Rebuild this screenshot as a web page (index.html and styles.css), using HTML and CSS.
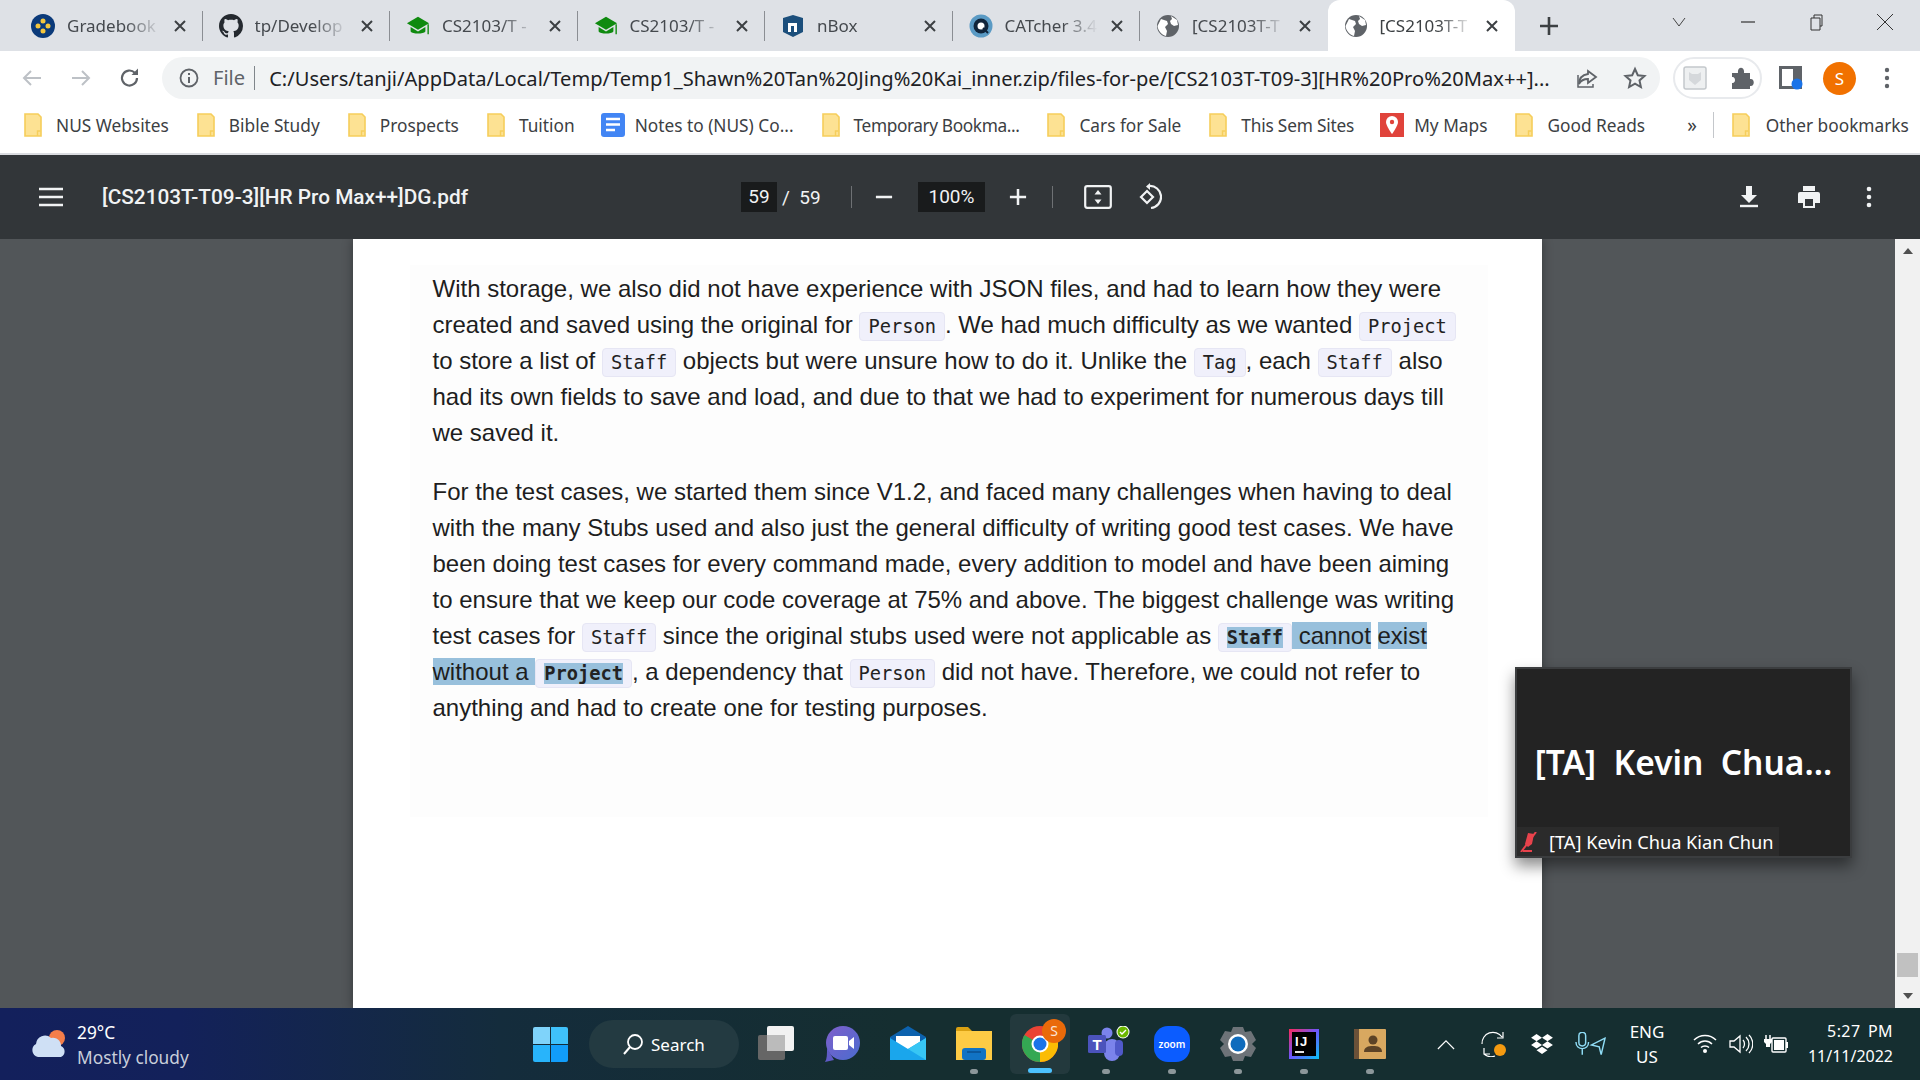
FILE: index.html
```html
<!DOCTYPE html>
<html>

<head>
    <meta charset="UTF-8">
    <title>[CS2103T-T09-3][HR Pro Max++]DG.pdf</title>
    <link rel="stylesheet" href="styles.css">
</head>

<body>
    <svg class="defs" width="0" height="0">
        <symbol id="folder" viewBox="0 0 18 24">
            <path d="M1 1h13l3 3v19H1z" fill="#fde293" stroke="#f6ce5b" stroke-width="1.6" />
            <path d="M13.5 23v-5h3" fill="none" stroke="#f6ce5b" stroke-width="1.4" />
        </symbol>
        <symbol id="globe" viewBox="0 0 24 24">
            <circle cx="12" cy="12" r="11" fill="#5f6368" />
            <path d="M5 5l6 2 1 3-3 3 2 4-1 5C6 21 2 17 1.500 12zM15 2l6 4 1 5-4 1-3-2-1-3 2-2z" fill="#fff" />
        </symbol>
        <symbol id="cap" viewBox="0 0 26 24">
            <path d="M13 2L1 9l12 7 12-7z" fill="#0f8a0f" />
            <path d="M5 13v5c2 3 14 3 16 0v-5l-8 5z" fill="#0f8a0f" />
            <path d="M24 10v11" stroke="#0f8a0f" stroke-width="1.500" />
        </symbol>
        <symbol id="close" viewBox="0 0 14 14">
            <path d="M2 2l10 10M12 2L2 12" stroke="#3c4043" stroke-width="2" />
        </symbol>
    </svg>

    <div class="tabstrip">
        <div class="tab">
            <svg class="favicon" viewBox="0 0 24 24">
                <circle cx="12" cy="12" r="12" fill="#0b3a7a" />
                <circle cx="12" cy="7" r="2.500" fill="#f4c63d" />
                <circle cx="7" cy="12" r="2.500" fill="#f4c63d" />
                <circle cx="17" cy="12" r="2.500" fill="#f4c63d" />
                <circle cx="12" cy="17" r="2.500" fill="#f4c63d" />
            </svg>
            <span class="tab-title">Gradebook</span>
            <svg class="tab-close"><use href="#close" /></svg>
        </div>
        <div class="tab">
            <svg class="favicon" viewBox="0 0 16 16">
                <path fill="#24292f" d="M8 0C3.58 0 0 3.58 0 8c0 3.54 2.29 6.53 5.47 7.59.4.07.55-.17.55-.38 0-.19-.01-.82-.01-1.49-2.01.37-2.53-.49-2.69-.94-.09-.23-.48-.94-.82-1.13-.28-.15-.68-.52-.01-.53.63-.01 1.08.58 1.23.82.72 1.21 1.87.87 2.33.66.07-.52.28-.87.51-1.07-1.78-.2-3.64-.89-3.64-3.95 0-.87.31-1.59.82-2.15-.08-.2-.36-1.02.08-2.12 0 0 .67-.21 2.2.82.64-.18 1.32-.27 2-.27.68 0 1.36.09 2 .27 1.53-1.04 2.2-.82 2.2-.82.44 1.1.16 1.92.08 2.12.51.56.82 1.27.82 2.15 0 3.07-1.87 3.75-3.65 3.95.29.25.54.73.54 1.48 0 1.07-.01 1.93-.01 2.2 0 .21.15.46.55.38A8.013 8.013 0 0016 8c0-4.42-3.58-8-8-8z" />
            </svg>
            <span class="tab-title">tp/Develop</span>
            <svg class="tab-close"><use href="#close" /></svg>
        </div>
        <div class="tab">
            <svg class="favicon"><use href="#cap" /></svg>
            <span class="tab-title">CS2103/T -</span>
            <svg class="tab-close"><use href="#close" /></svg>
        </div>
        <div class="tab">
            <svg class="favicon"><use href="#cap" /></svg>
            <span class="tab-title">CS2103/T -</span>
            <svg class="tab-close"><use href="#close" /></svg>
        </div>
        <div class="tab">
            <svg class="favicon" viewBox="0 0 24 24">
                <path d="M2 4l10-3 10 3v14l-10 5-10-5z" fill="#1c4f7c" />
                <path d="M7 18V9h9v9h-3v-6h-3v6z" fill="#fff" />
            </svg>
            <span class="tab-title">nBox</span>
            <svg class="tab-close"><use href="#close" /></svg>
        </div>
        <div class="tab">
            <svg class="favicon" viewBox="0 0 24 24">
                <circle cx="12" cy="12" r="11.500" fill="#5a9ac4" />
                <circle cx="12" cy="12" r="7.500" fill="#10243a" />
                <circle cx="12" cy="12" r="3.500" fill="#fff" />
                <path d="M14 14l5 5" stroke="#10243a" stroke-width="2" />
            </svg>
            <span class="tab-title">CATcher 3.4</span>
            <svg class="tab-close"><use href="#close" /></svg>
        </div>
        <div class="tab tab-last">
            <svg class="favicon"><use href="#globe" /></svg>
            <span class="tab-title">[CS2103T-T</span>
            <svg class="tab-close"><use href="#close" /></svg>
        </div>
        <div class="tab tab-active">
            <svg class="favicon"><use href="#globe" /></svg>
            <span class="tab-title">[CS2103T-T</span>
            <svg class="tab-close"><use href="#close" /></svg>
        </div>
        <svg class="new-tab" viewBox="0 0 20 20">
            <path d="M10 1v18M1 10h18" stroke="#3c4043" stroke-width="2.600" />
        </svg>
        <div class="win-controls">
            <svg class="win-btn" viewBox="0 0 20 20"><path d="M4 6l6 8 6-8" fill="none" stroke="#444" stroke-width="1" /></svg>
            <svg class="win-btn" viewBox="0 0 20 20"><path d="M3 10h14" stroke="#333" stroke-width="1.200" /></svg>
            <svg class="win-btn" viewBox="0 0 20 20"><path d="M5 6h9v12H5zM8 6V3h8v11h-2" fill="none" stroke="#333" stroke-width="1" /></svg>
            <svg class="win-btn" viewBox="0 0 20 20"><path d="M2 2l16 16M18 2L2 18" stroke="#333" stroke-width="1" /></svg>
        </div>
    </div>

    <div class="toolbar">
        <svg class="nav-icon" viewBox="0 0 24 24"><path d="M21 12H4M11 5l-7 7 7 7" fill="none" stroke="#bdc1c6" stroke-width="2" /></svg>
        <svg class="nav-icon" viewBox="0 0 24 24"><path d="M3 12h17M13 5l7 7-7 7" fill="none" stroke="#bdc1c6" stroke-width="2" /></svg>
        <svg class="nav-icon" viewBox="0 0 24 24"><path d="M19 12a7.500 7.500 0 1 1-2.200-5.300" fill="none" stroke="#5f6368" stroke-width="2.200" /><path d="M20 2.500V9h-6.500z" fill="#5f6368" /></svg>
        <div class="omnibox">
            <svg class="info-icon" viewBox="0 0 20 20">
                <circle cx="10" cy="10" r="8.500" fill="none" stroke="#5f6368" stroke-width="1.800" />
                <path d="M10 9v6M10 5v2" stroke="#5f6368" stroke-width="2" />
            </svg>
            <span class="omni-file">File</span>
            <span class="omni-url">C:/Users/tanji/AppData/Local/Temp/Temp1_Shawn%20Tan%20Jing%20Kai_inner.zip/files-for-pe/[CS2103T-T09-3][HR%20Pro%20Max++]...</span>
            <svg class="omni-icon omni-share" viewBox="0 0 24 24">
                <path d="M13 5l8 6-8 6v-4c-4 0-7 1-9 5 0-6 3-9 9-10z" fill="none" stroke="#5f6368" stroke-width="1.800" />
                <path d="M3 9v12h15v-3" fill="none" stroke="#5f6368" stroke-width="1.500" />
            </svg>
            <svg class="omni-icon" viewBox="0 0 24 24">
                <path d="M12 3l2.800 6.200 6.700.7-5 4.500 1.400 6.600-5.900-3.400L6.100 21l1.400-6.600-5-4.500 6.700-.7z" fill="none" stroke="#5f6368" stroke-width="2" />
            </svg>
        </div>
        <div class="ext-pill">
            <svg class="ext-icon" viewBox="0 0 24 24">
                <rect x="1" y="1" width="22" height="22" rx="2" fill="#eef0f1" stroke="#c4c8cc" stroke-width="1.500" />
                <path d="M6 6l3 2h6l3-2v8l-6 5-6-5z" fill="#d5d8db" />
            </svg>
            <svg class="ext-icon" viewBox="0 0 24 24">
                <path d="M2 7h6C7 0 15 0 14 7h6v6c5-1 5 8 0 7v3H2v-6c4 1 4-7 0-6z" fill="#5f6368" />
            </svg>
        </div>
        <svg class="side-icon" viewBox="0 0 24 24">
            <path d="M1.500 1.500h20v20h-20z" fill="#fff" stroke="#5f6368" stroke-width="3" />
            <path d="M14 1h8v13h-8z" fill="#5f6368" />
            <circle cx="18" cy="18" r="5.500" fill="#1a73e8" />
        </svg>
        <div class="avatar">S</div>
        <svg class="dots" viewBox="0 0 6 22">
            <circle cx="3" cy="3" r="2.200" fill="#5f6368" />
            <circle cx="3" cy="11" r="2.200" fill="#5f6368" />
            <circle cx="3" cy="19" r="2.200" fill="#5f6368" />
        </svg>
    </div>

    <div class="bookmarks">
        <div class="bm"><svg class="bm-icon"><use href="#folder" /></svg>NUS Websites</div>
        <div class="bm"><svg class="bm-icon"><use href="#folder" /></svg>Bible Study</div>
        <div class="bm"><svg class="bm-icon"><use href="#folder" /></svg>Prospects</div>
        <div class="bm bm-before-icon"><svg class="bm-icon"><use href="#folder" /></svg>Tuition</div>
        <div class="bm bm-wide-icon">
            <svg class="bm-square" viewBox="0 0 24 24">
                <rect width="24" height="24" rx="3" fill="#4285f4" />
                <path d="M5 6h14M5 11.500h14M5 17h9" stroke="#fff" stroke-width="2.600" />
            </svg>Notes to (NUS) Co...
        </div>
        <div class="bm bm-tight"><svg class="bm-icon"><use href="#folder" /></svg>Temporary Bookma...</div>
        <div class="bm"><svg class="bm-icon"><use href="#folder" /></svg>Cars for Sale</div>
        <div class="bm bm-before-icon bm-snug"><svg class="bm-icon"><use href="#folder" /></svg>This Sem Sites</div>
        <div class="bm bm-wide-icon">
            <svg class="bm-square" viewBox="0 0 24 24">
                <rect width="24" height="24" fill="#e0433b" />
                <path d="M12 3a6 6 0 0 0-6 6c0 4 6 12 6 12s6-8 6-12a6 6 0 0 0-6-6z" fill="#fff" />
                <circle cx="12" cy="9" r="2.200" fill="#e0433b" />
            </svg>My Maps
        </div>
        <div class="bm"><svg class="bm-icon"><use href="#folder" /></svg>Good Reads</div>
        <div class="bm-more">»</div>
        <div class="bm-sep"></div>
        <div class="bm bm-other"><svg class="bm-icon"><use href="#folder" /></svg>Other bookmarks</div>
    </div>

    <div class="pdf-bar">
        <div class="pdf-left">
            <svg class="burger" viewBox="0 0 24 20"><path d="M0 2h24M0 10h24M0 18h24" stroke="#f1f3f4" stroke-width="2.600" /></svg>
            <span class="pdf-title">[CS2103T-T09-3][HR Pro Max++]DG.pdf</span>
        </div>
        <div class="pdf-mid">
            <span class="num-box">59</span>
            <span class="page-total">/&nbsp;&nbsp;59</span>
            <span class="pdf-sep"></span>
            <svg class="pm-icon pm-minus" viewBox="0 0 20 20"><path d="M1 10h18" stroke="#f1f3f4" stroke-width="2.800" /></svg>
            <span class="num-box zoom-box">100%</span>
            <svg class="pm-icon pm-plus" viewBox="0 0 20 20"><path d="M1 10h18M10 1v18" stroke="#f1f3f4" stroke-width="2.800" /></svg>
            <span class="pdf-sep pdf-sep-two"></span>
            <svg class="fit-icon" viewBox="0 0 28 24">
                <rect x="1.200" y="1.200" width="25.600" height="21.600" rx="2" fill="none" stroke="#f1f3f4" stroke-width="2.200" />
                <path d="M14 5l3.500 4.500h-7zM14 19l3.500-4.500h-7z" fill="#f1f3f4" />
            </svg>
            <svg class="rotate-icon" viewBox="0 0 28 28">
                <path d="M10 14l6-6 6 6-6 6z" fill="none" stroke="#f1f3f4" stroke-width="2.200" transform="translate(-3 0)" />
                <path d="M15 3a11 11 0 0 1 2 22" fill="none" stroke="#f1f3f4" stroke-width="2.200" />
                <path d="M16 0v7l-4-3.500z" fill="#f1f3f4" />
            </svg>
        </div>
        <div class="pdf-right">
            <svg class="pr-icon" viewBox="0 0 24 24">
                <path d="M9 1h6v9h5l-8 8-8-8h5z" fill="#f1f3f4" />
                <path d="M3 21h18" stroke="#f1f3f4" stroke-width="2.400" />
            </svg>
            <svg class="pr-icon" viewBox="0 0 24 24">
                <path d="M6 1h12v5H6z" fill="#f1f3f4" />
                <path d="M3 7h18a2 2 0 0 1 2 2v9h-5v5H6v-5H1V9a2 2 0 0 1 2-2z" fill="#f1f3f4" />
                <path d="M8 14h8v7H8z" fill="#323639" />
            </svg>
            <svg class="pr-icon" viewBox="0 0 24 24">
                <circle cx="12" cy="4" r="2.300" fill="#f1f3f4" />
                <circle cx="12" cy="12" r="2.300" fill="#f1f3f4" />
                <circle cx="12" cy="20" r="2.300" fill="#f1f3f4" />
            </svg>
        </div>
    </div>

    <div class="main">
        <div class="viewer">
            <div class="sheet">
                <div class="content">
                    <p>With storage, we also did not have experience with JSON files, and had to learn how they were<br>
                        created and saved using the original for <code>Person</code>. We had much difficulty as we wanted <code>Project</code><br>
                        to store a list of <code>Staff</code> objects but were unsure how to do it. Unlike the <code>Tag</code>, each <code>Staff</code> also<br>
                        had its own fields to save and load, and due to that we had to experiment for numerous days till<br>
                        we saved it.</p>
                    <p>For the test cases, we started them since V1.2, and faced many challenges when having to deal<br>
                        with the many Stubs used and also just the general difficulty of writing good test cases. We have<br>
                        been doing test cases for every command made, every addition to model and have been aiming<br>
                        to ensure that we keep our code coverage at 75% and above. The biggest challenge was writing<br>
                        test cases for <code>Staff</code> since the original stubs used were not applicable as <code class="sel-code"><mark>Staff</mark></code><mark> cannot</mark> <mark>exist</mark><br>
                        <mark>without a </mark><code class="sel-code"><mark>Project</mark></code>, a dependency that <code>Person</code> did not have. Therefore, we could not refer to<br>
                        anything and had to create one for testing purposes.</p>
                </div>
            </div>
        </div>
        <div class="scrollbar">
            <span class="arrow-up"></span>
            <span class="thumb"></span>
            <span class="arrow-down"></span>
        </div>
        <div class="zoom-win">
            <div class="zoom-name">[TA]&nbsp; Kevin&nbsp; Chua...</div>
            <div class="zoom-label">
                <svg class="mute" viewBox="0 0 20 20">
                    <path d="M9 1l6 1-2 10-4 3-3-3z" fill="#e8434c" />
                    <path d="M17 0L2 20" stroke="#e8434c" stroke-width="2" />
                    <path d="M4 19h9" stroke="#e8434c" stroke-width="2" />
                </svg>
                [TA] Kevin Chua Kian Chun
            </div>
        </div>
    </div>

    <div class="taskbar">
        <div class="weather">
            <svg class="weather-icon" viewBox="0 0 36 34">
                <circle cx="27" cy="11" r="8" fill="#f47e4a" />
                <path d="M8 30a7 7 0 0 1-2-13 9 9 0 0 1 15-6 8 8 0 0 1 10 8 6 6 0 0 1 0 11z" fill="#cfe0f5" />
            </svg>
            <div class="weather-text">
                <span>29°C</span>
                <span class="weather-sub">Mostly cloudy</span>
            </div>
        </div>
        <svg class="start" viewBox="0 0 35 35">
            <path d="M0 2a2 2 0 0 1 2-2h15v17H0z" fill="#7fd3fa" />
            <path d="M18 0h15a2 2 0 0 1 2 2v15H18z" fill="#3fc1fb" />
            <path d="M0 18h17v17H2a2 2 0 0 1-2-2z" fill="#28b4fb" />
            <path d="M18 18h17v15a2 2 0 0 1-2 2H18z" fill="#119dfa" />
        </svg>
        <div class="search">
            <svg class="search-icon" viewBox="0 0 22 22">
                <circle cx="13" cy="9" r="7" fill="none" stroke="#fff" stroke-width="1.800" />
                <path d="M8 14l-6 7" stroke="#fff" stroke-width="2" />
            </svg>
            Search
        </div>
        <div class="apps">
            <div class="app">
                <svg class="app-icon" viewBox="0 0 36 36">
                    <rect x="0" y="9" width="27" height="25" rx="2" fill="#666" />
                    <rect x="9" y="0" width="27" height="25" rx="2" fill="#f2f2f2" />
                    <rect x="9" y="9" width="18" height="16" fill="#bbb" />
                </svg>
            </div>
            <div class="app">
                <svg class="app-icon" viewBox="0 0 36 36">
                    <defs>
                        <linearGradient id="meetg" x1="0" y1="0" x2="1" y2="1">
                            <stop offset="0" stop-color="#7f5fcb" />
                            <stop offset="1" stop-color="#4a6ccf" />
                        </linearGradient>
                    </defs>
                    <circle cx="19" cy="17" r="17" fill="url(#meetg)" />
                    <path d="M3 22l7 12-9 2c2-3 2-8 2-14z" fill="#5f5bc6" />
                    <rect x="9" y="10" width="15" height="14" rx="2" fill="#fff" />
                    <path d="M25 15l5-4v12l-5-4z" fill="#fff" />
                </svg>
            </div>
            <div class="app">
                <svg class="app-icon" viewBox="0 0 36 36">
                    <path d="M0 11L18 0l18 11v23H0z" fill="#0c62ae" />
                    <path d="M6 10h24v8L18 24 6 18z" fill="#fff" />
                    <path d="M0 12l18 11 18-11v22H0z" fill="#1aa6ec" />
                    <path d="M18 23l18-11v22z" fill="#37c6f4" />
                </svg>
            </div>
            <div class="app running">
                <svg class="app-icon" viewBox="0 0 36 36">
                    <path d="M0 3a2 2 0 0 1 2-2h10l4 4h-16z" fill="#d9a012" />
                    <rect x="0" y="5" width="36" height="29" fill="#fdcb45" />
                    <rect x="6" y="22" width="24" height="12" rx="3" fill="#1173c4" />
                    <path d="M11 26h14" stroke="#0a4f91" stroke-width="1.500" />
                </svg>
            </div>
            <div class="app active">
                <svg class="app-icon chrome-icon" viewBox="0 0 36 36">
                    <circle cx="18" cy="18" r="18" fill="#ea4335" />
                    <path d="M18 18L33.600 9A18 18 0 0 1 18 36z" fill="#fbbc04" />
                    <path d="M18 18L18 36A18 18 0 0 1 2.400 9z" fill="#34a853" />
                    <circle cx="18" cy="18" r="8.500" fill="#fff" />
                    <circle cx="18" cy="18" r="6.500" fill="#1a73e8" />
                </svg>
                <span class="chrome-badge">S</span>
            </div>
            <div class="app running">
                <svg class="app-icon teams-icon" viewBox="0 0 42 36">
                    <circle cx="19" cy="7" r="5.500" fill="#7b83eb" />
                    <rect x="16" y="13" width="16" height="22" rx="8" fill="#7b83eb" />
                    <rect x="27" y="14" width="8" height="16" rx="4" fill="#5059c9" />
                    <rect x="0" y="9" width="18" height="18" rx="1.500" fill="#4b53bc" />
                    <text class="teams-t" x="9" y="23.500">T</text>
                    <circle cx="35" cy="6" r="6.500" fill="#fff" />
                    <circle cx="35" cy="6" r="5.500" fill="#6bb700" />
                    <path d="M32 6l2 2 4-4" fill="none" stroke="#fff" stroke-width="1.400" />
                </svg>
            </div>
            <div class="app running">
                <div class="zoom-icon">zoom</div>
            </div>
            <div class="app running">
                <svg class="app-icon" viewBox="0 0 36 36">
                    <path d="M13 1h10l2 5 6-1 5 9-4 4 4 4-5 9-6-1-2 5H13l-2-5-6 1-5-9 4-4-4-4 5-9 6 1z" fill="#6d7378" />
                    <circle cx="18" cy="18" r="10" fill="#fff" />
                    <circle cx="18" cy="18" r="7.500" fill="#0f6cbd" />
                </svg>
            </div>
            <div class="app running">
                <svg class="app-icon ij-icon" viewBox="0 0 30 30">
                    <defs>
                        <linearGradient id="ijg" x1="0" y1="0" x2="1" y2="1">
                            <stop offset="0" stop-color="#fe2857" />
                            <stop offset="0.500" stop-color="#6b57ff" />
                            <stop offset="1" stop-color="#07c3f2" />
                        </linearGradient>
                    </defs>
                    <rect width="30" height="30" fill="url(#ijg)" />
                    <rect x="3" y="3" width="24" height="24" fill="#000" />
                    <text class="ij-text" x="6" y="17">IJ</text>
                    <path d="M6 23h9" stroke="#fff" stroke-width="1.800" />
                </svg>
            </div>
            <div class="app running">
                <svg class="app-icon book-icon" viewBox="0 0 32 30">
                    <rect width="32" height="30" rx="1" fill="#d8a860" />
                    <rect width="5" height="30" fill="#6b5138" />
                    <circle cx="19" cy="11" r="4.500" fill="#5c4326" />
                    <path d="M10 23c0-5 4-6 9-6s9 1 9 6z" fill="#5c4326" />
                </svg>
            </div>
        </div>
        <div class="tray">
            <svg class="tray-chevron" viewBox="0 0 20 12"><path d="M1 11l9-9 9 9" fill="none" stroke="#fff" stroke-width="1.300" /></svg>
            <svg class="tray-sync" viewBox="0 0 26 26">
                <path d="M1 13A11 11 0 0 1 21 6M22 1v6h-6" fill="none" stroke="#fff" stroke-width="1.200" />
                <path d="M3 17l0 6h6M3 23a11 11 0 0 0 11 2" fill="none" stroke="#fff" stroke-width="1.200" />
                <circle cx="19" cy="19" r="6" fill="#f49a10" />
            </svg>
            <svg class="tray-drop" viewBox="0 0 24 22">
                <path d="M6 0l6 4-6 4-6-4zM18 0l6 4-6 4-6-4zM6 8l6 4-6 4-6-4zM18 8l6 4-6 4-6-4zM12 14l6 4-6 4-6-4z" fill="#fff" />
            </svg>
            <svg class="tray-mic" viewBox="0 0 32 24">
                <rect x="4" y="0" width="7" height="14" rx="3.500" fill="none" stroke="#8fdcf5" stroke-width="1.500" />
                <path d="M1 10c0 9 13 9 13 0M7.500 17v6" fill="none" stroke="#8fdcf5" stroke-width="1.500" />
                <path d="M31 6l-14 7 8 2 2 8z" fill="none" stroke="#8fdcf5" stroke-width="1.500" />
            </svg>
            <div class="tray-lang"><span>ENG</span><span>US</span></div>
            <svg class="tray-wifi" viewBox="0 0 24 20">
                <path d="M1 6c6-6 16-6 22 0M5 10c4-4 10-4 14 0M8 13.500c2-2 6-2 8 0" fill="none" stroke="#fff" stroke-width="1.500" />
                <circle cx="12" cy="17" r="2" fill="#fff" />
            </svg>
            <svg class="tray-vol" viewBox="0 0 24 20">
                <path d="M1 7h4l6-5v16l-6-5H1z" fill="none" stroke="#fff" stroke-width="1.300" />
                <path d="M14 6c2 2 2 6 0 8M17 3c4 4 4 10 0 14M20 1c5 5 5 13 0 18" fill="none" stroke="#fff" stroke-width="1.300" />
            </svg>
            <svg class="tray-batt" viewBox="0 0 24 20">
                <path d="M2 1v4M6 1v4" stroke="#fff" stroke-width="1.500" />
                <path d="M0 5h8v3l-2 2v3H2v-3L0 8z" fill="#fff" />
                <rect x="8" y="4" width="14" height="14" rx="1" fill="none" stroke="#fff" stroke-width="1.400" />
                <rect x="10" y="6" width="10" height="10" fill="#fff" />
                <rect x="22" y="8" width="2" height="6" fill="#fff" />
            </svg>
            <div class="tray-clock"><span class="clock-time">5:27 PM</span><span>11/11/2022</span></div>
        </div>
    </div>
</body>

</html>
```

FILE: styles.css
```css
* {
    box-sizing: border-box;
}

html,
body {
    height: 100%;
}

body {
    margin: 0;
    display: flex;
    flex-direction: column;
    overflow: hidden;
    background-color: #fff;
    font-family: "Noto Sans", sans-serif;
    color: #3c4043;
}

.defs {
    position: absolute;
}

svg {
    flex: none;
    display: block;
}

/* tab strip */
.tabstrip {
    height: 51px;
    flex: none;
    display: flex;
    align-items: center;
    padding-left: 15px;
    background-color: #dee1e6;
}

.tab {
    width: 187.5px;
    height: 100%;
    display: flex;
    align-items: center;
    padding: 0 16px 0 16px;
    gap: 12px;
    position: relative;
    font-size: 17px;
    color: #45494e;
}

.tab::after {
    content: "";
    position: absolute;
    right: 0;
    top: 11px;
    width: 1px;
    height: 30px;
    background-color: #8b8e93;
}

.tab-last::after,
.tab-active::after {
    display: none;
}

.tab-active {
    background-color: #fff;
    border-radius: 12px 12px 0 0;
    color: #3c4043;
}

.favicon {
    width: 24px;
    height: 24px;
}

.tab-title {
    flex: 1;
    overflow: hidden;
    white-space: nowrap;
    -webkit-mask-image: linear-gradient(to right, #000 62%, transparent 100%);
    mask-image: linear-gradient(to right, #000 62%, transparent 100%);
}

.tab-close {
    width: 14px;
    height: 14px;
}

.new-tab {
    width: 20px;
    height: 20px;
    margin-left: 24px;
}

.win-controls {
    display: flex;
    margin-left: auto;
}

.win-btn {
    width: 20px;
    height: 20px;
    margin-right: 48.700px;
    margin-top: -8px;
}

.win-btn:last-child {
    margin-right: 25px;
}

/* address bar */
.toolbar {
    height: 54px;
    flex: none;
    display: flex;
    align-items: center;
    padding: 6px 0 6px 20px;
    background-color: #fff;
}

.nav-icon {
    width: 24px;
    height: 24px;
    margin-right: 25px;
}

.omnibox {
    width: 1498px;
    height: 42px;
    margin-left: -5px;
    display: flex;
    align-items: center;
    padding: 0 13px 0 17px;
    border-radius: 21px;
    background-color: #f1f3f4;
    font-size: 20.100px;
    color: #202124;
}

.info-icon {
    width: 20px;
    height: 20px;
    margin-right: 14px;
}

.omni-file {
    padding-right: 9px;
    border-right: 1px solid #80868b;
    line-height: 24px;
    color: #5f6368;
}

.omni-url {
    margin-left: 14px;
    white-space: nowrap;
}

.omni-icon {
    width: 24px;
    height: 24px;
    margin-left: 24px;
}

.omni-share {
    margin-left: auto;
}

.ext-pill {
    width: 89px;
    height: 42px;
    margin-left: 13px;
    display: flex;
    align-items: center;
    justify-content: space-between;
    padding: 0 6px 0 8px;
    border: 2px solid #e8eaed;
    border-radius: 21px;
}

.ext-icon {
    width: 24px;
    height: 24px;
}

.side-icon {
    width: 24px;
    height: 24px;
    margin-left: 17px;
}

.avatar {
    width: 33px;
    height: 33px;
    margin-left: 20px;
    border-radius: 50%;
    background-color: #f17100;
    color: #fff;
    text-align: center;
    line-height: 33px;
    font-size: 17px;
}

.dots {
    width: 6px;
    height: 22px;
    margin-left: 28px;
}

/* bookmarks */
.bookmarks {
    height: 50px;
    flex: none;
    display: flex;
    align-items: center;
    padding-left: 24px;
    padding-bottom: 8px;
    background-color: #fff;
    border-bottom: 2px solid #dadce0;
    font-size: 17.300px;
    white-space: nowrap;
}

.bm {
    display: flex;
    align-items: center;
    gap: 14px;
    margin-right: 28px;
}

.bm-before-icon {
    margin-right: 26px;
}

.bm-wide-icon {
    gap: 10px;
}

.bm-tight {
    letter-spacing: -0.400px;
}

.bm-snug {
    letter-spacing: -0.200px;
}

.bm-icon {
    width: 18px;
    height: 24px;
}

.bm-square {
    width: 24px;
    height: 24px;
}

.bm-more {
    margin-left: 14px;
    font-size: 19px;
}

.bm-sep {
    width: 1px;
    height: 26px;
    margin-left: 16px;
    background-color: #c4c7cb;
}

.bm-other {
    margin-left: 18px;
    margin-right: 0;
    gap: 16px;
}

/* pdf toolbar */
.pdf-bar {
    height: 84px;
    flex: none;
    display: flex;
    align-items: center;
    background-color: #323639;
    color: #f1f3f4;
    font-family: Roboto, sans-serif;
}

.pdf-left {
    width: 741px;
    display: flex;
    align-items: center;
    padding-left: 39px;
}

.burger {
    width: 24px;
    height: 20px;
}

.pdf-title {
    margin-left: 39px;
    font-size: 20.800px;
    font-weight: 500;
    white-space: nowrap;
}

.pdf-mid {
    display: flex;
    align-items: center;
    font-size: 19px;
}

.num-box {
    width: 36px;
    height: 30px;
    background-color: #191b1c;
    text-align: center;
    line-height: 30px;
}

.zoom-box {
    width: 67px;
}

.page-total {
    margin-left: 5px;
    width: 53px;
}

.pdf-sep {
    width: 1px;
    height: 22px;
    margin: 0 16px;
    background-color: #6e7174;
}

.pdf-sep-two {
    margin-left: 25px;
}

.pm-icon {
    width: 18px;
    height: 18px;
}

.pm-minus {
    margin-left: 7px;
    margin-right: 25px;
}

.pm-plus {
    margin-left: 24px;
}

.fit-icon {
    width: 28px;
    height: 24px;
    margin-left: 15px;
}

.rotate-icon {
    width: 28px;
    height: 30px;
    margin-left: 22px;
}

.pdf-right {
    margin-left: auto;
    display: flex;
    align-items: center;
    gap: 36px;
    padding-right: 39px;
}

.pr-icon {
    width: 24px;
    height: 24px;
}

/* document */
.main {
    flex: 1;
    min-height: 0;
    display: flex;
    position: relative;
    background-color: #525659;
}

.viewer {
    flex: 1;
    display: flex;
    justify-content: center;
    overflow: hidden;
}

.sheet {
    width: 1189px;
    padding: 26px 54px 0 57px;
    background-color: #fff;
    box-shadow: 0 0 10px rgba(0, 0, 0, 0.35);
}

.content {
    height: 552px;
    padding: 6px 0 0 22.500px;
    background-color: #fdfdfd;
    font-family: "Liberation Sans", sans-serif;
    font-size: 24px;
    line-height: 36px;
    color: #1e1e1e;
    white-space: nowrap;
}

.content p {
    margin: 0 0 23px;
}

code {
    display: inline-block;
    height: 29px;
    padding: 0 8px;
    vertical-align: baseline;
    border: 1px solid #e6e6f4;
    border-radius: 4px;
    background-color: #f0f0fb;
    font-family: "DejaVu Sans Mono", monospace;
    font-size: 18.700px;
    line-height: 27px;
    color: #222;
}

.sel-code {
    font-weight: 700;
}

mark {
    background-color: #98c0dc;
    color: inherit;
}

.scrollbar {
    width: 25px;
    flex: none;
    position: relative;
    background-color: #f1f1f1;
}

.arrow-up,
.arrow-down {
    position: absolute;
    left: 8px;
    width: 0;
    height: 0;
    border-left: 5px solid transparent;
    border-right: 5px solid transparent;
}

.arrow-up {
    top: 9px;
    border-bottom: 6px solid #505050;
}

.arrow-down {
    bottom: 9px;
    border-top: 6px solid #505050;
}

.thumb {
    position: absolute;
    left: 2px;
    right: 2px;
    top: 714px;
    height: 24px;
    background-color: #c1c1c1;
}

/* floating zoom window */
.zoom-win {
    position: absolute;
    left: 1515px;
    top: 428px;
    width: 337px;
    height: 191px;
    display: flex;
    align-items: center;
    justify-content: center;
    padding-bottom: 2px;
    background-color: #232323;
    border: 2px solid #3b3d3f;
    box-shadow: 0 8px 14px rgba(0, 0, 0, 0.45);
    color: #fff;
}

.zoom-name {
    font-size: 33.500px;
    font-weight: 600;
    white-space: nowrap;
}

.zoom-label {
    position: absolute;
    left: 0;
    bottom: 0;
    height: 29px;
    width: 262px;
    display: flex;
    align-items: center;
    gap: 10px;
    padding-left: 2px;
    background-color: #2b2b2b;
    font-size: 18.200px;
    white-space: nowrap;
}

.mute {
    width: 20px;
    height: 20px;
}

/* taskbar */
.taskbar {
    height: 72px;
    flex: none;
    display: flex;
    align-items: center;
    background: linear-gradient(to right, #13205c 0, #13215a 180px, #142c3c 500px, #152e30 900px);
    color: #fff;
}

.weather {
    width: 533px;
    display: flex;
    align-items: center;
    gap: 11px;
    padding-left: 30px;
}

.weather-icon {
    width: 36px;
    height: 34px;
}

.weather-text {
    display: flex;
    flex-direction: column;
    padding-top: 2px;
    font-size: 17.300px;
    line-height: 25px;
}

.weather-sub {
    color: #c9cfdb;
}

.start {
    width: 35px;
    height: 35px;
}

.search {
    width: 150px;
    height: 48px;
    margin-left: 21px;
    display: flex;
    align-items: center;
    gap: 7px;
    padding-left: 33px;
    border-radius: 24px;
    background-color: #233a41;
    font-size: 17px;
}

.search-icon {
    width: 22px;
    height: 22px;
}

.apps {
    display: flex;
    align-items: center;
    margin-left: 4px;
}

.app {
    width: 66px;
    height: 60px;
    position: relative;
    display: flex;
    align-items: center;
    justify-content: center;
}

.app-icon {
    width: 36px;
    height: 36px;
}

.running::after,
.active::after {
    content: "";
    position: absolute;
    left: 50%;
    bottom: 0;
    width: 8px;
    height: 5px;
    margin-left: -4px;
    border-radius: 3px;
    background-color: #8c979a;
}

.active {
    width: 60px;
    margin: 0 3px;
    border-radius: 6px;
    background-color: #23393d;
}

.active::after {
    width: 24px;
    margin-left: -12px;
    bottom: 1px;
    background-color: #4cc2ff;
}

.chrome-badge {
    position: absolute;
    left: 32px;
    top: 5px;
    width: 24px;
    height: 24px;
    border-radius: 50%;
    background-color: #ea6a0a;
    color: #fbe5d6;
    text-align: center;
    font-size: 14px;
    line-height: 24px;
}

.teams-icon {
    width: 42px;
    margin-left: 6px;
}

.teams-t {
    font-family: "Liberation Sans", sans-serif;
    font-size: 15px;
    font-weight: 700;
    text-anchor: middle;
    fill: #fff;
}

.zoom-icon {
    width: 36px;
    height: 36px;
    border-radius: 14px;
    background-color: #0b5cff;
    text-align: center;
    font-size: 10px;
    font-weight: 600;
    line-height: 36px;
}

.ij-icon {
    width: 30px;
    height: 30px;
}

.ij-text {
    font-family: "Liberation Sans", sans-serif;
    font-size: 13px;
    font-weight: 700;
    letter-spacing: 1.500px;
    fill: #fff;
}

.book-icon {
    width: 32px;
    height: 30px;
}

.tray {
    flex: 1;
    display: flex;
    align-items: center;
    padding-left: 34px;
}

.tray-chevron {
    width: 18px;
    height: 11px;
}

.tray-sync {
    width: 26px;
    height: 26px;
    margin-left: 26px;
}

.tray-drop {
    width: 22px;
    height: 20px;
    margin-left: 24px;
}

.tray-mic {
    width: 31px;
    height: 24px;
    margin-left: 22px;
}

.tray-lang {
    width: 50px;
    margin-left: 16px;
    display: flex;
    flex-direction: column;
    align-items: center;
    font-size: 17px;
    line-height: 25px;
}

.tray-wifi,
.tray-vol,
.tray-batt {
    width: 24px;
    height: 20px;
}

.tray-wifi {
    margin-left: 21px;
}

.tray-vol {
    margin-left: 12px;
}

.tray-batt {
    margin-left: 11px;
}

.tray-clock {
    margin-left: auto;
    padding-right: 27px;
    display: flex;
    flex-direction: column;
    align-items: flex-end;
    font-size: 16px;
    line-height: 25px;
}

.clock-time {
    letter-spacing: 0.400px;
    word-spacing: 3px;
}
```
